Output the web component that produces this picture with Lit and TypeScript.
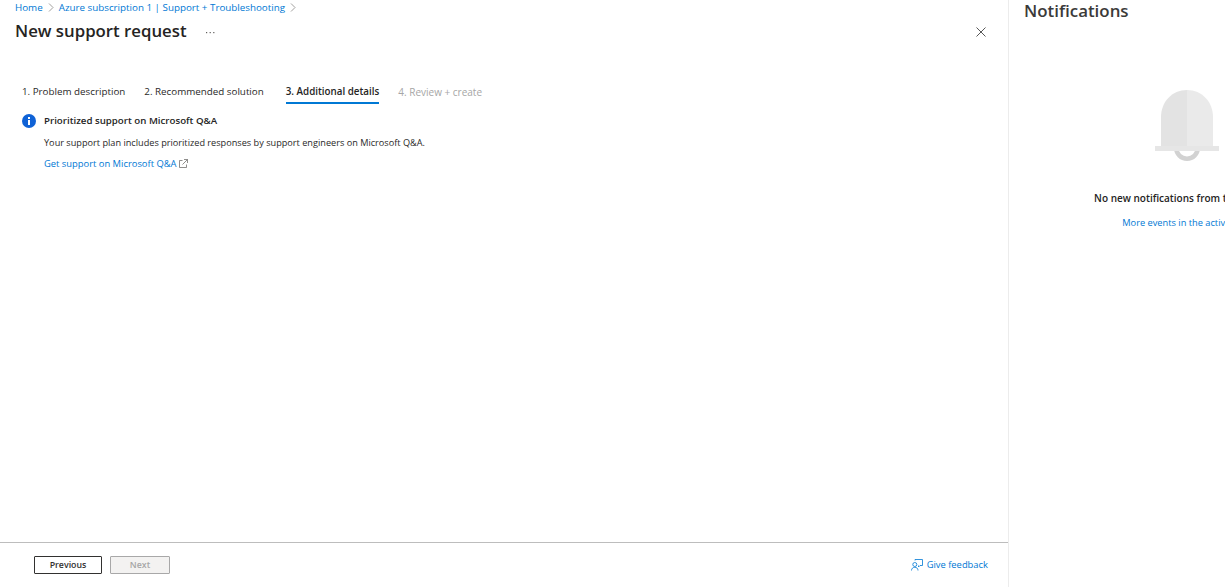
import { LitElement, html, css } from "lit";
import { customElement } from "lit/decorators.js";

@customElement("app-root")
export class AppRoot extends LitElement {
  static styles = css`
    :host {
      display: flex;
      width: 1225px;
      height: 587px;
      overflow: hidden;
      background: #fff;
      color: #292827;
      font-family: "Open Sans", "Noto Sans", sans-serif;
      font-size: 9.8px;
    }
    a { color: #0078d4; text-decoration: none; }
    .main {
      flex: 0 0 1008px;
      display: flex;
      flex-direction: column;
      min-width: 0;
    }
    .crumbs {
      display: flex;
      align-items: center;
      height: 14px;
      padding-left: 15px;
      white-space: nowrap;
    }
    .crumbs svg { margin: 0 5px; }
    .title-row {
      display: flex;
      align-items: center;
      height: 34px;
      padding: 0 22px 0 15px;
    }
    h1 {
      margin: 0;
      font-size: 16.8px;
      font-weight: 600;
      color: #252423;
      line-height: 24px;
    }
    .more { margin: 2px 0 0 19px; display: flex; }
    .close { margin: 2px 0 0 auto; display: flex; }
    .tabs {
      display: flex;
      gap: 19px;
      margin-top: 34px;
      padding-left: 22px;
      height: 25px;
    }
    .tab {
      height: 20px;
      line-height: 20px;
      white-space: nowrap;
    }
    .tab.active {
      font-weight: 600;
      color: #252423;
      border-bottom: 2px solid #0078d4;
      margin-left: 3px;
    }
    .tab.disabled { color: #a6a6a6; font-size: 10px; }
    .info {
      display: flex;
      gap: 8px;
      padding: 7px 0 0 22px;
      flex: 1;
      font-size: 9.17px;
    }
    .info svg.i { flex: none; }
    .info-text { line-height: 13px; }
    .info-title { font-weight: 600; font-size: 9.7px; color: #252423; margin-bottom: 9px; }
    .info-body { margin-bottom: 8px; }
    .info-text a { font-size: 9.4px; }
    .ext { margin-left: 3px; vertical-align: -1px; }
    .footer {
      display: flex;
      align-items: center;
      gap: 8px;
      height: 45px;
      box-sizing: border-box;
      border-top: 1px solid #bdbdbd;
      padding: 0 20px 0 34px;
    }
    button {
      height: 18px;
      padding: 0;
      font: inherit;
      background: #fff;
      border: 1px solid #323130;
      border-radius: 1px;
      color: #323130;
      font-weight: 600;
      font-size: 8.8px;
      line-height: 14px;
    }
    .prev { width: 68px; }
    .next {
      width: 60px;
      background: #f3f2f1;
      border-color: #a8a8a8;
      color: #a6a6a6;
    }
    .feedback {
      margin: 0 0 1px auto;
      display: flex;
      align-items: center;
      gap: 4px;
      white-space: nowrap;
      font-size: 9.4px;
    }
    .panel {
      flex: 0 0 356px;
      box-sizing: border-box;
      border-left: 1px solid #ececec;
      display: flex;
      flex-direction: column;
      align-items: center;
    }
    .panel h2 {
      align-self: flex-start;
      margin: 0 0 0 15px;
      font-size: 16.9px;
      font-weight: 600;
      line-height: 22px;
      color: #3b3a39;
    }
    .bell { margin-top: 68px; display: block; }
    .none {
      margin-top: 26px;
      font-weight: 600;
      font-size: 10px;
      line-height: 14px;
      color: #252423;
      white-space: nowrap;
    }
    .events { margin-top: 11px; line-height: 14px; white-space: nowrap; font-size: 9.25px; }
  `;

  private chevron() {
    return html`<svg width="6" height="9" viewBox="0 0 6 9" fill="none" stroke="#8a8886" stroke-width="0.8"><path d="M1 .5l4 4-4 4"/></svg>`;
  }

  render() {
    return html`
      <div class="main">
        <div class="crumbs">
          <a href="#">Home</a>${this.chevron()}<a href="#">Azure subscription 1 | Support + Troubleshooting</a>${this.chevron()}
        </div>
        <div class="title-row">
          <h1>New support request</h1>
          <span class="more">
            <svg width="10" height="3" viewBox="0 0 10 3" fill="#605e5c"><rect x="0" y="1" width="1.2" height="1.2"/><rect x="3.6" y="1" width="1.2" height="1.2"/><rect x="7.2" y="1" width="1.2" height="1.2"/></svg>
          </span>
          <span class="close">
            <svg width="10" height="10" viewBox="0 0 10 10" fill="none" stroke="#444" stroke-width="0.9"><path d="M.5.5l9 9M9.5.5l-9 9"/></svg>
          </span>
        </div>
        <div class="tabs">
          <div class="tab">1. Problem description</div>
          <div class="tab">2. Recommended solution</div>
          <div class="tab active">3. Additional details</div>
          <div class="tab disabled">4. Review + create</div>
        </div>
        <div class="info">
          <svg class="i" width="14" height="14" viewBox="0 0 14 14">
            <circle cx="7" cy="7" r="7" fill="#0f62d6"/>
            <rect x="6" y="6" width="2" height="5" fill="#fff"/>
            <rect x="6" y="3" width="2" height="2" fill="#fff"/>
          </svg>
          <div class="info-text">
            <div class="info-title">Prioritized support on Microsoft Q&amp;A</div>
            <div class="info-body">Your support plan includes prioritized responses by support engineers on Microsoft Q&amp;A.</div>
            <a href="#">Get support on Microsoft Q&amp;A<svg class="ext" width="9" height="9" viewBox="0 0 9 9" fill="none" stroke="#605e5c" stroke-width="0.7"><path d="M3.5 1.5H.5v7h7v-3M5 .5h3.5V4M8.5.5L3.5 5.5"/></svg></a>
          </div>
        </div>
        <div class="footer">
          <button class="prev">Previous</button>
          <button class="next" disabled>Next</button>
          <a class="feedback" href="#">
            <svg width="12" height="12" viewBox="0 0 12 12" fill="none" stroke="#0078d4" stroke-width="0.8"><circle cx="3.8" cy="5.5" r="2"/><path d="M.5 11.5c0-2 1.4-3.2 3.3-3.2s3.2 1.2 3.2 3.2M4 1.5V.5h7.5v6H9L7.5 8V6.5"/></svg>
            Give feedback
          </a>
        </div>
      </div>
      <div class="panel">
        <h2>Notifications</h2>
        <svg class="bell" width="64" height="75" viewBox="0 0 64 75">
          <path d="M19 56a13 13 0 0 0 26 0z" fill="#fff"/>
          <path d="M19 58a13 13 0 0 0 26 0h-4.5a8.5 8.5 0 0 1-17 0z" fill="#d2d2d2"/>
          <path d="M32 0C17 0 6 12 6 27v29h26z" fill="#e3e3e3"/>
          <path d="M32 0c15 0 26 12 26 27v29H32z" fill="#eaeaea"/>
          <rect x="0" y="56" width="64" height="5" fill="#e6e6e6"/>
        </svg>
        <div class="none">No new notifications from this session</div>
        <div class="events"><a href="#">More events in the activity log</a></div>
      </div>
    `;
  }
}
